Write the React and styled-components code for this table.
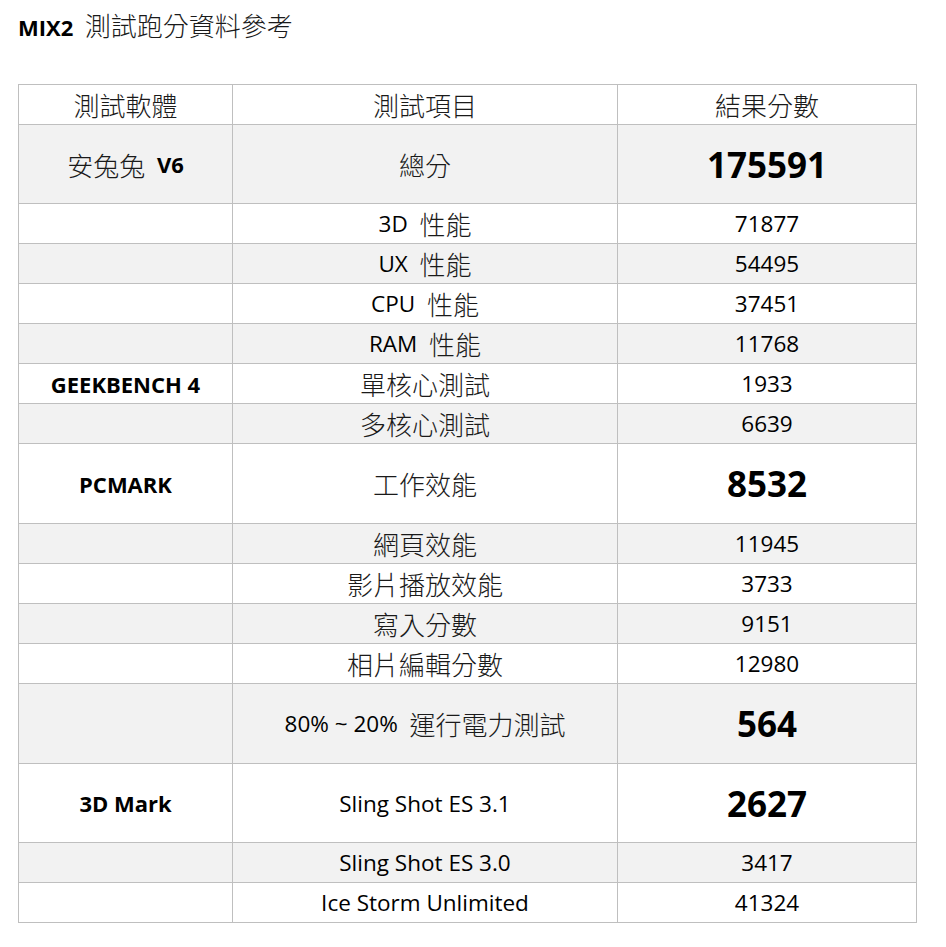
import React from 'react';
import styled, { createGlobalStyle } from 'styled-components';

const GlobalStyle = createGlobalStyle`
  body {
    margin: 0;
    background: #fff;
    color: #000;
    font-family: "Open Sans", "Noto Sans CJK TC", sans-serif;
  }
`;

const Page = styled.div`
  padding: 10px 0 0 18px;
`;

const Title = styled.h1`
  margin: 0;
  height: 30px;
  line-height: 30px;
  font-size: 22px;
  font-weight: 700;
  white-space: nowrap;
`;

const Table = styled.div`
  margin-top: 44px;
  width: 898px;
  border-top: 1px solid #bfbfbf;
  border-left: 1px solid #bfbfbf;
`;

const Row = styled.div`
  display: grid;
  grid-template-columns: 214px 385px 299px;
  height: ${(p) => p.$h}px;
  background: ${(p) => (p.$shade ? '#f2f2f2' : '#fff')};
`;

const Cell = styled.div`
  box-sizing: border-box;
  display: flex;
  align-items: center;
  justify-content: center;
  border-right: 1px solid #bfbfbf;
  border-bottom: 1px solid #bfbfbf;
  font-size: 22.5px;
  white-space: nowrap;
`;

const Han = styled.span`
  font-family: "Noto Sans CJK TC", sans-serif;
  font-size: 26px;
  font-weight: 300;
  color: #1a1a1a;
`;

const Strong = styled.span`
  font-weight: 700;
  font-size: 22px;
`;

const Score = styled.span`
  font-weight: ${(p) => (p.$big ? 700 : 400)};
  font-size: ${(p) => (p.$big ? 35 : 22.5)}px;
`;

const sp = '\u00a0\u00a0';

const rows = [
  { app: <><Han>安兔兔</Han>{sp}<Strong>V6</Strong></>, item: <Han>總分</Han>, score: '175591', big: true, h: 79 },
  { item: <>3D{sp}<Han>性能</Han></>, score: '71877' },
  { item: <>UX{sp}<Han>性能</Han></>, score: '54495' },
  { item: <>CPU{sp}<Han>性能</Han></>, score: '37451' },
  { item: <>RAM{sp}<Han>性能</Han></>, score: '11768' },
  { app: <Strong>GEEKBENCH 4</Strong>, item: <Han>單核心測試</Han>, score: '1933' },
  { item: <Han>多核心測試</Han>, score: '6639' },
  { app: <Strong>PCMARK</Strong>, item: <Han>工作效能</Han>, score: '8532', big: true, h: 80 },
  { item: <Han>網頁效能</Han>, score: '11945' },
  { item: <Han>影片播放效能</Han>, score: '3733' },
  { item: <Han>寫入分數</Han>, score: '9151' },
  { item: <Han>相片編輯分數</Han>, score: '12980' },
  { item: <>80% ~ 20%{sp}<Han>運行電力測試</Han></>, score: '564', big: true, h: 80 },
  { app: <Strong>3D Mark</Strong>, item: 'Sling Shot ES 3.1', score: '2627', big: true, h: 79 },
  { item: 'Sling Shot ES 3.0', score: '3417' },
  { item: 'Ice Storm Unlimited', score: '41324' },
];

export default function App() {
  return (
    <Page>
      <GlobalStyle />
      <Title>
        MIX2{sp}<Han>測試跑分資料參考</Han>
      </Title>
      <Table>
        <Row $h={40}>
          <Cell><Han>測試軟體</Han></Cell>
          <Cell><Han>測試項目</Han></Cell>
          <Cell><Han>結果分數</Han></Cell>
        </Row>
        {rows.map((r, i) => (
          <Row key={i} $h={r.h || 40} $shade={i % 2 === 0}>
            <Cell>{r.app}</Cell>
            <Cell>{r.item}</Cell>
            <Cell><Score $big={r.big}>{r.score}</Score></Cell>
          </Row>
        ))}
      </Table>
    </Page>
  );
}
